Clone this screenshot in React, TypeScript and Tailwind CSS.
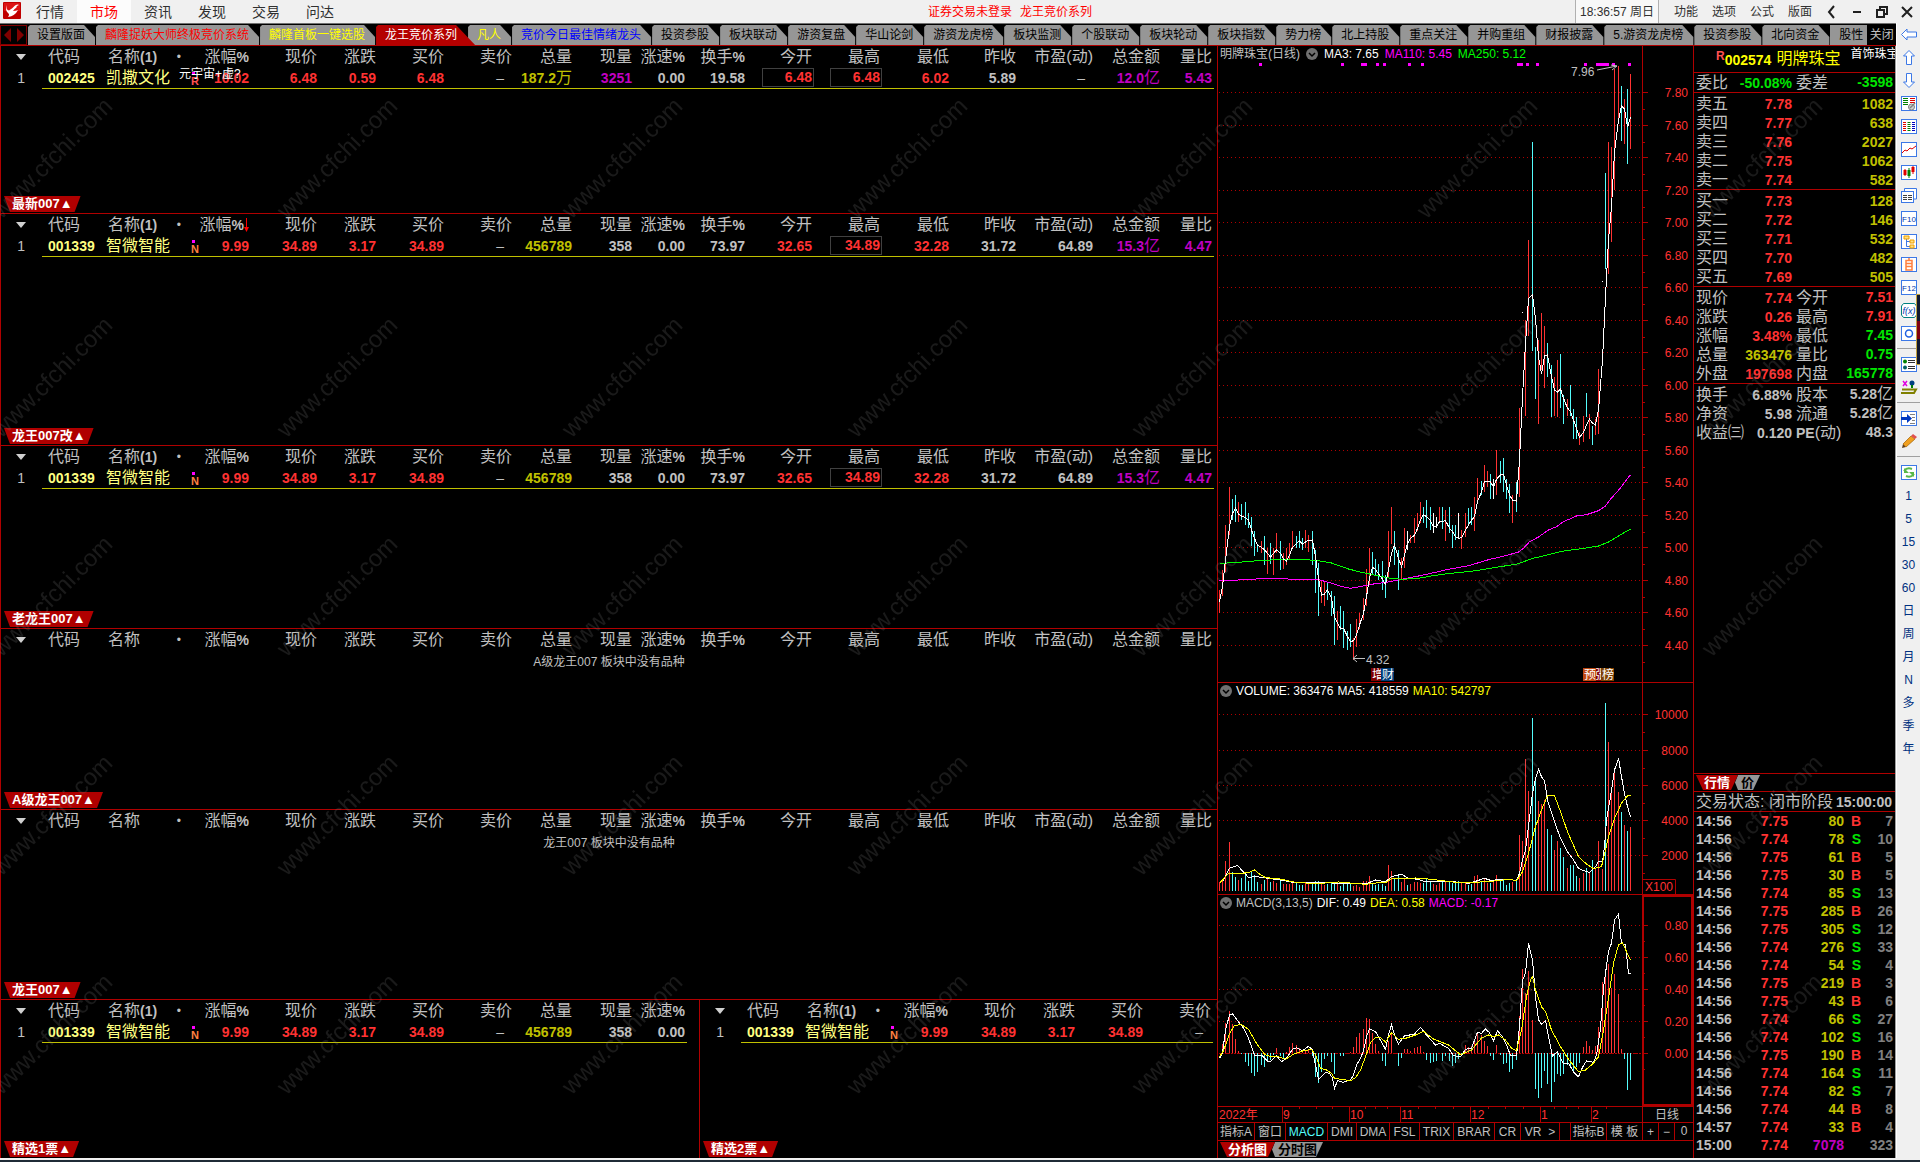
import type { ReactNode } from "react";

const UI = "font-['Liberation_Sans','Noto_Sans_CJK_SC',sans-serif]";

const NAV = ["行情", "市场", "资讯", "发现", "交易", "问达"];
const MENUS = ["功能", "选项", "公式", "版面"];

const PAGES: { name: string; cls?: string }[] = [
  { name: "设置版面" },
  { name: "麟隆捉妖大师终极竞价系统", cls: "text-[#ff0000]" },
  { name: "麟隆首板一键选股", cls: "text-[#ffff00]" },
  { name: "龙王竞价系列" },
  { name: "凡人", cls: "text-[#ffff00]" },
  { name: "竞价今日最佳情绪龙头", cls: "text-[#0000ff]" },
  { name: "投资参股" },
  { name: "板块联动" },
  { name: "游资复盘" },
  { name: "华山论剑" },
  { name: "游资龙虎榜" },
  { name: "板块监测" },
  { name: "个股联动" },
  { name: "板块轮动" },
  { name: "板块指数" },
  { name: "势力榜" },
  { name: "北上持股" },
  { name: "重点关注" },
  { name: "并购重组" },
  { name: "财报披露" },
  { name: "5.游资龙虎榜" },
  { name: "投资参股" },
  { name: "北向资金" },
];

const RED = "text-[#ff3232]";
const GRAY = "text-[#c0c0c0]";
const YELLOW = "text-[#c0c000]";
const PURPLE = "text-[#c000c0]";
const GREEN = "text-[#00e600]";

const COLS = [
  { name: "涨幅%", w: "w-[68px]" },
  { name: "现价", w: "w-[68px]" },
  { name: "涨跌", w: "w-[59px]" },
  { name: "买价", w: "w-[68px]" },
  { name: "卖价", w: "w-[68px]" },
  { name: "总量", w: "w-[60px]" },
  { name: "现量", w: "w-[60px]" },
  { name: "涨速%", w: "w-[53px]" },
  { name: "换手%", w: "w-[60px]" },
  { name: "今开", w: "w-[67px]" },
  { name: "最高", w: "w-[68px]" },
  { name: "最低", w: "w-[69px]" },
  { name: "昨收", w: "w-[67px]" },
  { name: "市盈(动)", w: "w-[77px]" },
  { name: "总金额", w: "w-[67px]" },
  { name: "量比", w: "w-[52px]" },
];

type Cell = { v: string; c: string; box?: boolean };
type Stock = { code: string; name: string; mark: string; note?: string; cells: Cell[] };

const KAISA: Stock = {
  code: "002425",
  name: "凯撒文化",
  mark: "R",
  note: "元宇宙+虚?",
  cells: [
    { v: "10.02", c: RED },
    { v: "6.48", c: RED },
    { v: "0.59", c: RED },
    { v: "6.48", c: RED },
    { v: "–", c: GRAY },
    { v: "187.2万", c: YELLOW },
    { v: "3251", c: PURPLE },
    { v: "0.00", c: GRAY },
    { v: "19.58", c: GRAY },
    { v: "6.48", c: RED, box: true },
    { v: "6.48", c: RED, box: true },
    { v: "6.02", c: RED },
    { v: "5.89", c: GRAY },
    { v: "–", c: GRAY },
    { v: "12.0亿", c: PURPLE },
    { v: "5.43", c: PURPLE },
  ],
};

const ZHIWEI: Stock = {
  code: "001339",
  name: "智微智能",
  mark: "N",
  cells: [
    { v: "9.99", c: RED },
    { v: "34.89", c: RED },
    { v: "3.17", c: RED },
    { v: "34.89", c: RED },
    { v: "–", c: GRAY },
    { v: "456789", c: YELLOW },
    { v: "358", c: GRAY },
    { v: "0.00", c: GRAY },
    { v: "73.97", c: GRAY },
    { v: "32.65", c: RED },
    { v: "34.89", c: RED, box: true },
    { v: "32.28", c: RED },
    { v: "31.72", c: GRAY },
    { v: "64.89", c: GRAY },
    { v: "15.3亿", c: PURPLE },
    { v: "4.47", c: PURPLE },
  ],
};

// chart series are kept in thirds of a pixel: x, top, bottom, colour
const CANDLES =
  "13 1230 1300 r,22 1170 1248 r,31 1035 1175 r,43 921 1065 r,52 957 1020 c,61 945 1026 c,70 965 1026 r,79 972 1020 c,91 965 1035 c,100 999 1044 c,109 1011 1098 c,118 1053 1128 c,127 1093 1116 c,139 1083 1120 r,148 1068 1155 c,157 1105 1182 r,166 1090 1152 c,175 1105 1185 r,184 1059 1120 r,196 1083 1170 c,205 1120 1167 r,214 1105 1155 r,223 1090 1140 r,232 1053 1105 r,244 1068 1105 c,253 1053 1105 c,262 1075 1112 c,271 1050 1105 r,280 1065 1115 r,292 1053 1155 c,301 1110 1239 c,310 1150 1308 c,319 1200 1270 r,328 1206 1278 r,337 1206 1260 c,349 1233 1308 c,358 1248 1395 c,367 1293 1380 r,376 1278 1350 c,385 1293 1404 c,397 1353 1410 c,406 1332 1400 c,415 1375 1440 r,424 1317 1401 r,433 1299 1347 r,445 1254 1320 r,454 1167 1278 r,463 1104 1215 r,472 1116 1185 c,481 1137 1186 c,490 1152 1200 c,502 1143 1230 c,511 1185 1254 c,520 1053 1190 r,529 981 1092 r,538 1053 1155 c,550 1110 1230 c,559 1135 1200 r,568 1044 1165 r,577 1053 1110 w,586 1065 1090 r,598 1014 1090 r,607 999 1053 r,616 966 1029 r,625 981 1029 c,634 960 1044 c,646 981 1050 c,655 999 1059 w,664 1011 1044 w,673 981 1026 r,682 981 1047 c,691 990 1083 r,703 981 1060 c,712 1035 1104 c,721 1035 1080 c,730 999 1077 w,739 1050 1107 r,751 999 1070 r,760 984 1035 c,769 981 1035 c,778 951 1053 r,787 894 960 r,799 903 945 c,808 855 935 r,817 873 921 r,826 882 957 c,835 897 957 w,844 810 945 r,856 843 910 c,865 834 936 c,874 897 957 c,883 912 999 c,892 945 1029 r,904 906 996 c,913 684 951 r,922 396 399 w,931 420 708 r,940 180 468 r,952 -114 513 c,961 501 657 c,970 480 732 r,979 399 570 r,988 438 624 r,997 489 591 c,1009 555 711 c,1018 591 708 r,1027 540 711 r,1036 522 684 c,1045 645 732 c,1057 657 708 r,1066 615 708 c,1075 687 777 c,1084 711 777 c,1093 755 795 r,1105 708 786 r,1114 639 711 c,1123 702 777 r,1132 738 795 c,1141 717 765 r,1150 567 762 r,1162 303 306 w,1171 -21 267 c,1180 -114 282 r,1189 -99 186 r,1198 -333 30 r,1210 -342 -183 r,1219 -282 -117 c,1228 -243 -108 r,1237 -273 -48 c,1246 -318 -93 r";

const MA3 =
  "13,1265 22,1220 31,1140 43,1040 52,1000 61,985 70,1002 79,1008 91,1013 100,1020 109,1050 118,1075 127,1095 139,1102 148,1110 157,1120 166,1132 175,1120 184,1110 196,1120 205,1137 214,1143 223,1125 232,1102 244,1090 253,1083 262,1092 271,1086 280,1081 292,1080 301,1130 310,1195 319,1245 328,1242 337,1230 349,1255 358,1310 367,1330 376,1345 385,1345 397,1370 406,1385 415,1382 424,1365 433,1335 445,1300 454,1250 463,1195 472,1162 481,1168 490,1182 502,1198 511,1213 520,1170 529,1120 538,1095 550,1135 559,1160 568,1125 577,1090 586,1075 598,1066 607,1045 616,1020 625,1004 634,1010 646,1022 655,1040 664,1040 673,1025 682,1024 691,1022 703,1045 712,1055 721,1070 730,1075 739,1073 751,1050 760,1035 769,1020 778,1010 787,965 799,935 808,905 817,904 826,906 835,920 844,898 856,885 865,883 874,915 883,945 892,960 904,963 913,840 922,650 931,490 940,355 952,345 961,415 970,530 979,582 988,528 997,525 1009,590 1018,630 1027,636 1036,627 1045,655 1057,684 1066,695 1075,720 1084,745 1093,772 1105,757 1114,735 1123,717 1132,730 1141,735 1150,690 1162,540 1171,350 1180,180 1189,80 1198,-85 1210,-180 1219,-222 1228,-213 1237,-158 1246,-188";
const MA110 =
  "13,1201 70,1200 160,1195 205,1195 222,1198 310,1199 340,1207 375,1219 406,1225 440,1219 475,1212 520,1206 560,1198 610,1188 660,1177 700,1168 760,1157 820,1139 870,1127 910,1116 925,1105 943,1085 970,1071 1000,1050 1025,1040 1045,1025 1085,1008 1115,1004 1150,992 1170,978 1190,954 1215,924 1246,884";
const MA250 =
  "13,1150 60,1148 100,1144 170,1140 250,1138 300,1141 350,1149 400,1167 440,1177 480,1186 520,1194 560,1198 610,1195 650,1188 690,1182 780,1172 850,1161 910,1151 950,1136 1000,1124 1040,1114 1100,1106 1150,1098 1180,1086 1210,1068 1246,1047";

const VOLUMES =
  "13 665 r,22 657 r,31 603 r,43 546 r,52 636 c,61 650 c,70 660 r,79 655 c,91 642 c,100 662 c,109 634 c,118 645 c,127 665 c,139 672 r,148 660 c,157 655 r,166 666 c,175 663 r,184 668 r,196 664 c,205 672 r,214 672 r,223 672 r,232 668 r,244 670 c,253 675 c,262 676 c,271 666 r,280 672 r,292 666 c,301 663 c,310 663 c,319 672 r,328 675 r,337 672 c,349 668 c,358 666 c,367 669 r,376 678 c,385 670 c,397 670 c,406 672 c,415 678 r,424 675 r,433 680 r,445 664 r,454 664 r,463 648 r,472 668 c,481 674 c,490 672 c,502 672 c,511 678 c,520 615 r,529 633 r,538 657 c,550 648 c,559 666 r,568 658 r,577 676 c,586 672 r,598 666 r,607 666 r,616 668 r,625 670 c,634 656 c,646 666 c,655 672 r,664 676 r,673 668 r,682 664 c,691 664 r,703 666 c,712 668 c,721 668 c,730 664 c,739 668 r,751 668 r,760 676 c,769 672 c,778 648 r,787 645 r,799 666 c,808 657 r,817 668 r,826 668 c,835 664 r,844 645 r,856 660 c,865 660 c,874 674 c,883 668 c,892 666 r,904 660 c,913 525 r,922 543 r,931 297 r,940 393 r,952 174 c,961 355 c,970 423 r,979 432 r,988 420 r,997 507 c,1009 525 c,1018 570 r,1027 543 r,1036 564 c,1045 591 c,1057 624 r,1066 615 c,1075 615 c,1084 648 c,1093 654 r,1105 639 r,1114 624 c,1123 635 r,1132 600 c,1141 625 r,1150 543 r,1162 627 r,1171 129 c,1180 246 r,1189 380 r,1198 330 r,1210 396 r,1219 456 c,1228 495 r,1237 513 c,1246 501 r";
const VOL5 =
  "13,670 25,660 43,625 68,616 80,630 100,652 120,650 140,652 180,658 240,668 300,668 400,670 450,672 480,660 510,665 530,650 560,643 580,655 610,658 625,664 660,666 700,664 760,670 785,663 808,655 830,662 850,658 880,658 905,662 913,640 922,600 931,570 940,500 952,400 961,355 970,328 979,350 988,362 997,420 1018,485 1036,535 1057,575 1075,600 1090,625 1105,632 1123,637 1140,620 1150,604 1162,605 1168,560 1175,480 1185,410 1198,330 1210,295 1219,350 1228,400 1237,440 1246,470";
const VOL10 =
  "13,670 40,640 60,641 100,638 118,630 130,640 150,653 190,656 240,667 300,671 370,666 450,673 490,668 510,668 530,656 560,655 600,654 650,658 720,667 780,667 850,662 880,658 905,662 922,635 940,580 961,500 979,450 997,407 1018,407 1036,455 1057,515 1090,590 1115,612 1135,626 1160,620 1171,570 1180,530 1198,475 1219,430 1228,418 1237,408 1246,405";

const MACD =
  "22 1152,31 1089,43 1053,52 1093,61 1137,70 1173,79 1184,91 1206,100 1218,109 1239,118 1248,127 1236,139 1215,148 1221,157 1206,166 1200,175 1185,184 1164,196 1188,205 1194,214 1175,223 1161,232 1149,244 1155,253 1164,262 1176,271 1172,280 1168,292 1188,301 1251,310 1269,319 1236,328 1197,337 1188,349 1206,358 1242,376 1188,385 1190,406 1176,415 1160,424 1131,433 1119,445 1107,454 1074,463 1077,472 1119,481 1152,490 1173,502 1203,511 1218,520 1143,529 1116,550 1218,559 1196,568 1167,577 1167,586 1173,598 1164,607 1161,616 1158,625 1176,634 1200,646 1209,655 1208,664 1203,682 1203,691 1190,703 1203,712 1218,721 1209,730 1197,739 1184,751 1155,760 1161,769 1158,778 1140,787 1119,799 1125,808 1143,817 1158,826 1190,835 1200,844 1155,856 1185,865 1212,874 1209,883 1236,892 1227,904 1200,913 1068,922 927,931 1000,940 933,952 1080,961 1287,970 1314,979 1284,988 1233,997 1272,1009 1326,1018 1266,1027 1242,1036 1248,1045 1242,1057 1215,1066 1221,1075 1233,1084 1221,1093 1209,1105 1161,1114 1143,1123 1158,1132 1170,1141 1158,1150 1101,1162 966,1171 936,1180 912,1189 984,1198 942,1210 1002,1219 1167,1228 1197,1237 1290,1246 1260";
const DIF =
  "13,1195 22,1180 31,1110 43,1065 52,1062 70,1085 85,1105 100,1135 109,1160 118,1185 139,1185 157,1203 166,1205 184,1187 200,1205 214,1195 232,1168 244,1163 262,1172 280,1159 292,1170 301,1215 310,1257 319,1250 330,1237 342,1240 351,1254 358,1285 367,1262 385,1267 406,1260 415,1245 424,1215 436,1195 445,1172 454,1130 463,1106 480,1115 490,1130 511,1168 520,1125 529,1094 538,1125 550,1152 568,1128 598,1122 616,1102 634,1125 660,1155 673,1150 700,1165 715,1187 736,1190 751,1168 770,1165 787,1117 799,1120 811,1107 823,1118 835,1142 847,1112 862,1130 874,1155 885,1186 904,1188 913,1100 922,960 931,940 940,850 952,900 961,1010 970,1080 980,1092 990,1082 1000,1130 1012,1188 1027,1175 1045,1212 1060,1210 1078,1240 1090,1250 1102,1222 1114,1203 1135,1207 1145,1185 1155,1105 1165,985 1180,873 1190,850 1198,780 1210,762 1220,850 1230,855 1240,940 1246,940";
const DEA =
  "13,1190 25,1172 43,1122 58,1096 80,1094 100,1108 125,1150 148,1183 166,1190 190,1190 210,1198 235,1183 262,1173 290,1168 300,1185 316,1225 334,1230 350,1240 358,1255 380,1258 405,1262 420,1253 436,1230 451,1190 466,1148 480,1132 495,1133 511,1146 529,1118 550,1138 575,1134 600,1125 625,1114 655,1137 700,1155 736,1184 770,1170 800,1134 820,1125 835,1130 850,1125 870,1140 890,1165 905,1172 920,1110 935,1010 945,960 952,950 962,990 980,1040 991,1055 1010,1110 1035,1160 1060,1198 1090,1235 1110,1230 1135,1210 1150,1190 1165,1110 1180,1015 1195,910 1210,855 1222,848 1235,875 1246,900";

const INK: Record<string, string> = { r: "#ff3232", c: "#54fcfc", w: "#ffffff" };

const ASKS = [
  ["卖五", "7.78", "1082"],
  ["卖四", "7.77", "638"],
  ["卖三", "7.76", "2027"],
  ["卖二", "7.75", "1062"],
  ["卖一", "7.74", "582"],
];
const BIDS = [
  ["买一", "7.73", "128"],
  ["买二", "7.72", "146"],
  ["买三", "7.71", "532"],
  ["买四", "7.70", "482"],
  ["买五", "7.69", "505"],
];

type Pair = [string, string, string, string, string, string];
const STATS: Pair[] = [
  ["现价", "7.74", RED, "今开", "7.51", RED],
  ["涨跌", "0.26", RED, "最高", "7.91", RED],
  ["涨幅", "3.48%", RED, "最低", "7.45", GREEN],
  ["总量", "363476", YELLOW, "量比", "0.75", GREEN],
  ["外盘", "197698", RED, "内盘", "165778", GREEN],
];
const BASICS: Pair[] = [
  ["换手", "6.88%", GRAY, "股本", "5.28亿", GRAY],
  ["净资", "5.98", GRAY, "流通", "5.28亿", GRAY],
  ["收益㈢", "0.120", GRAY, "PE(动)", "48.3", GRAY],
];

const TICKS = [
  ["14:56", "7.75", "80", "B", "7"],
  ["14:56", "7.74", "78", "S", "10"],
  ["14:56", "7.75", "61", "B", "5"],
  ["14:56", "7.75", "30", "B", "5"],
  ["14:56", "7.74", "85", "S", "13"],
  ["14:56", "7.75", "285", "B", "26"],
  ["14:56", "7.75", "305", "S", "12"],
  ["14:56", "7.74", "276", "S", "33"],
  ["14:56", "7.74", "54", "S", "4"],
  ["14:56", "7.75", "219", "B", "3"],
  ["14:56", "7.75", "43", "B", "6"],
  ["14:56", "7.74", "66", "S", "27"],
  ["14:56", "7.74", "102", "S", "16"],
  ["14:56", "7.75", "190", "B", "14"],
  ["14:56", "7.74", "164", "S", "11"],
  ["14:56", "7.74", "82", "S", "7"],
  ["14:56", "7.74", "44", "B", "8"],
  ["14:57", "7.74", "33", "B", "4"],
  ["15:00", "7.74", "7078", "", "323"],
];

const INDICATORS = [
  { t: "指标A", w: "w-[37px]" },
  { t: "窗口", w: "w-[31px]" },
  { t: "MACD", w: "w-[42px]" },
  { t: "DMI", w: "w-[29px]" },
  { t: "DMA", w: "w-[33px]" },
  { t: "FSL", w: "w-[30px]" },
  { t: "TRIX", w: "w-[34px]" },
  { t: "BRAR", w: "w-[41px]" },
  { t: "CR", w: "w-[26px]" },
];

const PERIODS = ["1", "5", "15", "30", "60", "日", "周", "月", "N", "多", "季", "年"];

export default function App() {
  return (
    <div className={`${UI} relative flex h-screen flex-col overflow-hidden bg-black text-xs`}>
      <TitleBar />
      <div className="flex min-h-0 flex-1">
        <div className="flex min-w-0 flex-1 flex-col">
          <PageTabs />
          <main className="grid min-h-0 flex-1 grid-cols-[1218fr_476fr_202fr]">
            <Boards />
            <Charts />
            <Quote />
          </main>
        </div>
        <Toolbar />
      </div>
      <div className="h-1 shrink-0 border-t-2 border-[#f0f0f0] bg-[#1f2b36]" />
      <Watermark />
    </div>
  );
}

function TitleBar() {
  return (
    <header className="flex h-6 shrink-0 items-stretch border-b border-[#707070] bg-[#f0f0f0] text-[#303030]">
      <svg viewBox="0 0 18 17" className="mt-[2px] ml-[3px] h-[17px] w-[18px]">
        <rect width="18" height="17" rx="1" fill="#c00000" />
        <rect x="1" y="1" width="16" height="8" fill="#dc1414" />
        <path
          d="M3.500 3Q3 8 6 8.500Q10 6 12 3.500Q15 2 16 3Q13 4 13.500 5.500Q11 7 10 9Q13 9 15 8Q12 14 5 15Q7 12 5 11Q2 8 3.500 3Z"
          fill="#fff"
        />
      </svg>
      <nav className="ml-[2px] flex text-sm">
        {NAV.map((n) => (
          <a
            key={n}
            href="#"
            className={`flex w-[54px] items-center justify-center ${n === "市场" ? "bg-[#fcfcfc] text-[#ff0000]" : ""}`}
          >
            {n}
          </a>
        ))}
      </nav>
      <h1 className="flex flex-1 items-center justify-center gap-2 pl-[98px] text-[#ff0000]">
        <span>证券交易未登录</span>
        <span>龙王竞价系列</span>
      </h1>
      <time className="flex w-[84px] items-center justify-center border-x border-[#b0b0b0] bg-[#f8f8f8]">
        18:36:57 周日
      </time>
      <div className="flex pl-2">
        {MENUS.map((m) => (
          <button key={m} type="button" className="w-[38px]">
            {m}
          </button>
        ))}
      </div>
      <div className="flex items-center pr-px">
        <WinButton label="收起">
          <path d="M10 2L5 8L10 14" />
        </WinButton>
        <WinButton label="最小化">
          <path d="M4 8H12" />
        </WinButton>
        <WinButton label="还原">
          <path d="M3 6H10V13H3ZM6 6V3H13V10H10" />
        </WinButton>
        <WinButton label="关闭窗口">
          <path d="M3 3L13 13M13 3L3 13" />
        </WinButton>
      </div>
    </header>
  );
}

function WinButton({ label, children }: { label: string; children: ReactNode }) {
  return (
    <button type="button" aria-label={label} className="flex w-[25px] justify-center">
      <svg viewBox="0 0 16 16" className="size-4" fill="none" stroke="#202020" strokeWidth="2">
        {children}
      </svg>
    </button>
  );
}

function PageTabs() {
  return (
    <div className="flex h-[22px] shrink-0 items-end overflow-hidden border-b border-[#b00000] whitespace-nowrap text-black">
      <button type="button" aria-label="翻页" className="mr-px flex h-5 w-[27px] items-center justify-center border border-[#800000]">
        <svg viewBox="0 0 22 14" className="h-[14px] w-[22px]" fill="#800000">
          <path d="M8 0V14L1 7ZM14 0V14L21 7Z" />
        </svg>
      </button>
      {PAGES.map((p, i) =>
        p.name === "龙王竞价系列" ? (
          <button
            key={i}
            type="button"
            className="relative z-10 -mr-[7px] h-5 bg-[#b40000] pr-[18px] pl-[9px] text-white [clip-path:polygon(0_2px,2px_0,calc(100%-19px)_0,100%_100%,0_100%)]"
          >
            {p.name}
          </button>
        ) : (
          <button
            key={i}
            type="button"
            className={`h-5 bg-[#969696] pr-[11px] pl-[9px] [clip-path:polygon(0_2px,2px_0,calc(100%-12px)_0,calc(100%-1px)_12px,calc(100%-1px)_100%,0_100%)] ${p.cls ?? ""}`}
          >
            {p.name}
          </button>
        ),
      )}
      <button type="button" className="h-5 w-[37px] overflow-hidden bg-[#969696] pl-[9px] text-left">
        股性
      </button>
      <button type="button" className="h-5 flex-1 bg-black text-center text-[#c0c0c0]">
        关闭
      </button>
    </div>
  );
}

function Boards() {
  return (
    <section className="grid min-h-0 min-w-0 grid-rows-[168fr_232fr_183fr_181fr_190fr_158fr] border-x border-[#b00000]">
      <Board tab="最新007" stock={KAISA} />
      <Board tab="龙王007改" stock={ZHIWEI} sorted />
      <Board tab="老龙王007" stock={ZHIWEI} />
      <Board tab="A级龙王007" empty="A级龙王007 板块中没有品种" />
      <Board tab="龙王007" empty="龙王007 板块中没有品种" />
      <div className="grid min-h-0 grid-cols-[698fr_518fr]">
        <Board tab="精选1票" stock={ZHIWEI} count={8} last />
        <div className="grid border-l border-[#b00000]">
          <Board tab="精选2票" stock={ZHIWEI} count={5} last />
        </div>
      </div>
    </section>
  );
}

function Board(props: {
  tab: string;
  stock?: Stock;
  empty?: string;
  sorted?: boolean;
  count?: number;
  last?: boolean;
}) {
  const { tab, stock, empty, sorted, count = 16, last } = props;
  const cols = COLS.slice(0, count);

  return (
    <div className={`flex min-h-0 min-w-0 flex-col overflow-hidden ${last ? "" : "border-b border-[#b00000]"}`}>
      <table className="w-full table-fixed border-separate border-spacing-0 text-right text-sm leading-4 whitespace-nowrap">
        <thead>
          <tr className="h-[21px] text-base leading-4 text-[#c0c0c0] [&>th]:p-0 [&>th]:pr-[2px] [&>th]:font-normal">
            <th className="w-[41px]">
              <svg viewBox="0 0 10 6" className="mr-[14px] ml-auto h-[6px] w-[10px]" fill="#d0d0d0">
                <path d="M0 0H10L5 6Z" />
              </svg>
            </th>
            <th className="w-[61px] text-left">
              <span className="pl-[6px]">代码</span>
            </th>
            <th className="w-[80px]">
              <span className="flex items-center justify-between pl-[5px]">
                <span>名称{stock && <span className="text-sm leading-4 font-bold">(1)</span>}</span>
                <span className="text-xs leading-4">•</span>
              </span>
            </th>
            {cols.map((c) => (
              <th key={c.name} className={c.w}>
                {c.name.replace("%", "")}
                {c.name.endsWith("%") && <span className="text-sm leading-4 font-bold">%</span>}
                {sorted && c.name === "涨幅%" && (
                  <svg viewBox="0 0 5 14" className="inline h-[14px] w-[5px]">
                    <path d="M2 0H3V9H5L2.500 14L0 9H2Z" fill="#ff0000" />
                  </svg>
                )}
              </th>
            ))}
            <th />
          </tr>
        </thead>
        {stock && (
          <tbody>
            <tr className="h-[22px] font-bold [&>td]:p-0 [&>td]:pr-[2px]">
              <td className="font-normal text-[#c0c0c0]">
                <span className="pr-[15px]">1</span>
              </td>
              <td className="border-b border-[#c0c000] text-left text-[#ffff80]">
                <span className="pl-[6px]">{stock.code}</span>
              </td>
              <td className="border-b border-[#c0c000] text-left text-base leading-4 font-normal text-[#ffff80]">
                <span className="pl-[3px]">{stock.name}</span>
              </td>
              {stock.cells.slice(0, count).map((c, i) => (
                <td key={i} className={`relative border-b border-[#c0c000] ${c.c}`}>
                  {i === 0 && <Mark stock={stock} />}
                  {c.box ? (
                    <span className="-mr-[2px] ml-auto block h-[19px] w-[52px] border border-[#404040] pr-px leading-[17px]">
                      {c.v}
                    </span>
                  ) : (
                    <Num v={c.v} />
                  )}
                </td>
              ))}
              <td />
            </tr>
          </tbody>
        )}
      </table>
      {empty && <p className="pt-[4px] text-center text-[#c0c0c0]">{empty}</p>}
      <button
        type="button"
        className="mt-auto mb-px ml-[3px] h-4 shrink-0 self-start bg-[#b00000] px-[8px] text-[13px] leading-4 font-bold text-white [clip-path:polygon(0_0,100%_0,calc(100%-6px)_100%,6px_100%)]"
      >
        {tab}▲
      </button>
    </div>
  );
}

// digits are bold, the 万/亿 unit is drawn larger in normal weight
function Num({ v }: { v: string }) {
  const unit = /[万亿]$/.test(v) ? v.slice(-1) : "";
  if (v === "–") return <span className="pr-2 font-normal">–</span>;
  return (
    <>
      {unit ? v.slice(0, -1) : v}
      {unit && <span className="text-base leading-4 font-normal">{unit}</span>}
    </>
  );
}

function Mark({ stock }: { stock: Stock }) {
  return (
    <>
      <span className="absolute top-[5px] left-[9px] size-[3px] bg-[#ff00ff]" />
      <span
        className={`absolute top-[8px] left-[8px] text-[11px] leading-3 ${stock.mark === "R" ? "text-[#ff5050]" : "text-[#ff8040]"}`}
      >
        {stock.mark}
      </span>
      {stock.note && (
        <span className="absolute -top-px -left-[4px] text-xs leading-4 font-normal text-white">{stock.note}</span>
      )}
    </>
  );
}

function Line({ pts, color, dy }: { pts: string; color: string; dy: number }) {
  const points = pts
    .split(" ")
    .map((p) => {
      const [x, y] = p.split(",").map(Number);
      return `${Math.floor(x / 3) + 1215.5},${(y / 3 + dy).toFixed(1)}`;
    })
    .join(" ");
  return <polyline points={points} fill="none" stroke={color} strokeWidth="1" shapeRendering="crispEdges" />;
}

function Bar({ x, a, b, color, dy }: { x: number; a: number; b: number; color: string; dy: number }) {
  const top = Math.round(Math.min(a, b) / 3) + dy;
  const h = Math.max(1, Math.round(Math.abs(b - a) / 3));
  return <rect x={Math.floor(x / 3) + 1215} y={top} width="1" height={h} fill={color} />;
}

function Axis(props: { rows: [string, number][]; from: number; to: number; half: number }) {
  const { rows, from, to, half } = props;
  return (
    <g stroke="#b00000" shapeRendering="crispEdges">
      {rows.map(([t, y]) => (
        <g key={t}>
          <path d={`M1219 ${y + 0.5}H1642`} strokeDasharray="1 3" />
          <path d={`M1642 ${y + 0.5}H1648M1642 ${y + half + 0.5}H1645`} />
          <text x="1688" y={y + 5} fill="#ff3232" stroke="none" textAnchor="end" fontSize="12">
            {t}
          </text>
        </g>
      ))}
      <path d={`M1642.500 ${from}V${to}`} />
    </g>
  );
}

function Fold() {
  return (
    <svg viewBox="0 0 12 12" className="size-3">
      <circle cx="6" cy="6" r="6" fill="#707070" />
      <path d="M3 5L6 8L9 5" fill="none" stroke="#000" strokeWidth="1.500" />
    </svg>
  );
}

const PRICE_ROWS: [string, number][] = Array.from({ length: 18 }, (_, i) => [
  (7.8 - i * 0.2).toFixed(2),
  Math.round(92 + i * 32.53),
]);

const FLAGS = [
  [1259, 3], [1341, 3], [1361, 6], [1376, 3], [1383, 3], [1408, 3], [1421, 3], [1517, 6],
  [1526, 3], [1536, 3], [1584, 3], [1596, 13], [1612, 3], [1628, 3],
];

// drawn in order, later badges cover the earlier ones
const BADGES = [
  { t: "增", x: 1371, c: "#800000" },
  { t: "财", x: 1381, c: "#003c78" },
  { t: "涨", x: 1592, c: "#800000" },
  { t: "预", x: 1583, c: "#c04810" },
  { t: "榜", x: 1601, c: "#804000" },
];

function Charts() {
  return (
    <section className="grid min-h-0 min-w-0 grid-rows-[637fr_212fr_212fr_16fr_18fr_17fr] border-r border-[#b00000]">
      <div className="relative min-h-0 border-b border-[#b00000]">
        <div className="absolute top-0 left-[2px] flex h-4 items-center gap-[6px] whitespace-nowrap">
          <span className="text-[#c0c0c0]">明牌珠宝(日线)</span>
          <Fold />
          <span className="text-white">MA3: 7.65</span>
          <span className="text-[#ff00ff]">MA110: 5.45</span>
          <span className="text-[#00ff00]">MA250: 5.12</span>
        </div>
        <svg viewBox="1218 46 475 636" className="block size-full">
          <Axis rows={PRICE_ROWS} from={46} to={682} half={17} />
          {FLAGS.map(([x, w]) => (
            <rect key={x} x={x} y="63" width={w} height="3" fill="#ff00ff" />
          ))}
          {CANDLES.split(",").map((s) => {
            const [x, a, b, k] = s.split(" ");
            return <Bar key={x} x={+x} a={+a} b={+b} color={INK[k]} dy={180} />;
          })}
          <Line pts={MA110} color="#ff00ff" dy={180} />
          <Line pts={MA250} color="#00ff00" dy={180} />
          <Line pts={MA3} color="#ffffff" dy={180} />
          <g fill="#c0c0c0" fontSize="12">
            <text x="1571" y="76">7.96</text>
            <text x="1366" y="664">4.32</text>
          </g>
          <path
            d="M1597 70L1617 66M1611 65L1617 66L1612 70M1353 658.500H1365M1357 655L1353 658.500L1357 662"
            fill="none"
            stroke="#c0c0c0"
          />
          {BADGES.map((b) => (
            <g key={b.t}>
              <rect x={b.x} y="668" width="13" height="13" fill={b.c} />
              <text x={b.x + 1} y="679" fontSize="12" fill="#fff">
                {b.t}
              </text>
            </g>
          ))}
        </svg>
      </div>

      <div className="relative min-h-0 border-b border-[#b00000]">
        <div className="absolute top-0 left-[2px] flex h-4 items-center gap-[4px] whitespace-nowrap text-white">
          <Fold />
          <span>VOLUME: 363476</span>
          <span>MA5: 418559</span>
          <span className="text-[#ffff00]">MA10: 542797</span>
        </div>
        <svg viewBox="1218 683 475 211" className="block size-full">
          <Axis
            rows={[["10000", 714], ["8000", 750], ["6000", 785], ["4000", 820], ["2000", 855]]}
            from={683}
            to={894}
            half={18}
          />
          {VOLUMES.split(",").map((s) => {
            const [x, y, k] = s.split(" ");
            return <Bar key={x} x={+x} a={+y} b={693} color={INK[k]} dy={660} />;
          })}
          <Line pts={VOL5} color="#ffffff" dy={660} />
          <Line pts={VOL10} color="#ffff00" dy={660} />
          <path d="M1643 879.500H1675.500V894" fill="none" stroke="#b00000" />
          <text x="1645" y="891" fontSize="12" fill="#ff3232">
            X100
          </text>
        </svg>
      </div>

      <div className="relative min-h-0 border-b border-[#b00000]">
        <div className="absolute top-0 left-[2px] flex h-4 items-center gap-[4px] whitespace-nowrap text-white">
          <Fold />
          <span className="text-[#c0c0c0]">MACD(3,13,5)</span>
          <span>DIF: 0.49</span>
          <span className="text-[#ffff00]">DEA: 0.58</span>
          <span className="text-[#ff00ff]">MACD: -0.17</span>
        </div>
        <svg viewBox="1218 895 475 211" className="block size-full">
          <Axis
            rows={[["0.80", 925], ["0.60", 957], ["0.40", 989], ["0.20", 1021], ["0.00", 1053]]}
            from={895}
            to={1106}
            half={16}
          />
          <path d="M1219 1053.500H1642" stroke="#b00000" strokeDasharray="2 1" shapeRendering="crispEdges" />
          {MACD.split(",").map((s) => {
            const [x, y] = s.split(" ").map(Number);
            return <Bar key={x} x={x} a={y} b={1180} color={y < 1180 ? INK.r : INK.c} dy={660} />;
          })}
          <Line pts={DIF} color="#ffffff" dy={660} />
          <Line pts={DEA} color="#ffff00" dy={660} />
          <rect x="1643" y="896" width="49" height="209" fill="none" stroke="#b00000" strokeWidth="2" />
        </svg>
      </div>

      <div className="min-h-0 border-b border-[#b00000]">
        <svg viewBox="1218 1107 475 15" className="block size-full" fontSize="12" fill="#ff3232">
          <path
            d="M1282.500 1107v15M1349.500 1107v15M1400.500 1107v15M1470.500 1107v15M1540.500 1107v15M1591.500 1107v15M1642.500 1107v15M1299.500 1107v2M1316.500 1107v2M1332.500 1107v2M1365.500 1107v2M1375.500 1107v2M1387.500 1107v2M1418.500 1107v2M1435.500 1107v2M1453.500 1107v2M1488.500 1107v2M1505.500 1107v2M1523.500 1107v2M1554.500 1107v2M1566.500 1107v2M1578.500 1107v2M1606.500 1107v2"
            stroke="#b00000"
          />
          <text x="1219" y="1119">2022年</text>
          <text x="1283" y="1119">9</text>
          <text x="1350" y="1119">10</text>
          <text x="1401" y="1119">11</text>
          <text x="1471" y="1119">12</text>
          <text x="1541" y="1119">1</text>
          <text x="1592" y="1119">2</text>
          <text x="1667" y="1119" textAnchor="middle" fill="#c0c0c0">日线</text>
        </svg>
      </div>

      <div className="flex min-h-0 border-b border-[#b00000] whitespace-nowrap text-[#c0c0c0] [&>button]:border-r [&>button]:border-[#b00000]">
        {INDICATORS.map((b) => (
          <button key={b.t} type="button" className={`${b.w} ${b.t === "MACD" ? "text-[#54fcfc]" : ""}`}>
            {b.t}
          </button>
        ))}
        <button type="button" className="w-[39px]">VR &nbsp;&gt;</button>
        <span className="w-[11px] border-r border-[#b00000]" />
        <button type="button" className="w-[36px]">指标B</button>
        <button type="button" className="w-[36px]">模 板</button>
        <button type="button" className="w-4">+</button>
        <button type="button" className="w-4">−</button>
        <span className="flex-1 text-center">0</span>
      </div>

      <div className="flex min-h-0 items-start pl-[2px]">
        <SlantTab on>分析图</SlantTab>
        <SlantTab>分时图</SlantTab>
      </div>
    </section>
  );
}

function SlantTab({ on, children }: { on?: boolean; children: ReactNode }) {
  return (
    <button
      type="button"
      className={
        on
          ? "relative z-10 mt-px h-[15px] bg-[#b00000] px-[8px] text-[13px] leading-[15px] font-bold text-white [clip-path:polygon(0_0,100%_0,calc(100%-7px)_100%,7px_100%)]"
          : "mt-px -ml-[3px] h-[15px] bg-[#969696] px-[6px] text-[13px] leading-[15px] font-bold text-black [clip-path:polygon(3px_0,100%_0,calc(100%-7px)_100%,3px_100%,0_50%)]"
      }
    >
      {children}
    </button>
  );
}

function Quote() {
  return (
    <aside className="flex min-h-0 min-w-0 flex-col overflow-hidden border-r border-[#a0a0a0] whitespace-nowrap">
      <div className="flex h-[27px] shrink-0 border-b border-[#b00000] pl-[22px]">
        <span className="w-4 pt-[2px] leading-4 font-bold text-[#ff5050]">R</span>
        <span className="pt-[4px] text-sm font-bold text-[#ffff00]">002574</span>
        <span className="pt-px pl-[5px] text-base text-[#ffff00]">明牌珠宝</span>
        <span className="pl-[10px] text-white">首饰珠宝</span>
      </div>
      <div className="shrink-0 border-b border-[#b00000]">
        <PairRow row={["委比", "-50.08%", GREEN, "委差", "-3598", GREEN]} />
      </div>
      <Levels rows={ASKS} />
      <Levels rows={BIDS} />
      <div className="shrink-0 border-b border-[#b00000] pt-px">
        {STATS.map((r) => (
          <PairRow key={r[0]} row={r} />
        ))}
      </div>
      <div className="pt-px">
        {BASICS.map((r) => (
          <PairRow key={r[0]} row={r} />
        ))}
      </div>

      <div className="mt-auto flex h-[19px] shrink-0 items-start border-y border-[#b00000] pl-[2px]">
        <SlantTab on>行情</SlantTab>
        <SlantTab>价</SlantTab>
      </div>
      <p className="flex h-5 shrink-0 items-center justify-between border-b border-[#b00000] pr-[3px] pl-[2px] text-base text-[#c0c0c0]">
        <span>交易状态: 闭市阶段</span>
        <span className="text-sm font-bold">15:00:00</span>
      </p>
      <table className="mb-1 w-full shrink-0 table-fixed border-separate border-spacing-0 text-right text-sm leading-[18px] font-bold">
        <tbody>
          {TICKS.map(([time, price, vol, side, n], i) => (
            <tr key={i} className="h-[18px] [&>td]:p-0">
              <td className="w-[54px] text-left text-[#c0c0c0]">
                <span className="pl-[2px]">{time}</span>
              </td>
              <td className="w-10 text-[#ff3232]">{price}</td>
              <td className={`w-[56px] ${side ? YELLOW : PURPLE}`}>{vol}</td>
              <td className={`w-[17px] ${side === "B" ? RED : GREEN}`}>{side}</td>
              <td className="text-[#808080]">
                <span className="pr-[2px]">{n}</span>
              </td>
            </tr>
          ))}
        </tbody>
      </table>
    </aside>
  );
}

function PairRow({ row }: { row: Pair }) {
  const [a, av, ac, b, bv, bc] = row;
  return (
    <div className="flex h-[19px] items-center pr-[2px] pl-[2px] text-base leading-[19px] text-[#c0c0c0]">
      <span>{a}</span>
      <span className={`ml-auto text-sm font-bold ${ac}`}>{av}</span>
      <span className="flex w-[101px] items-center justify-between pl-1">
        <span>
          {b.startsWith("PE") && <b className="text-sm">PE</b>}
          {b.replace("PE", "")}
        </span>
        <span className={`text-sm leading-[19px] font-bold ${bc}`}>
          <Num v={bv} />
        </span>
      </span>
    </div>
  );
}

function Levels({ rows }: { rows: string[][] }) {
  return (
    <div className="shrink-0 border-b border-[#b00000] pt-px">
      {rows.map(([label, price, vol]) => (
        <div key={label} className="flex h-[19px] items-center pr-[2px] pl-[2px] text-sm font-bold">
          <span className="text-base leading-[19px] font-normal text-[#c0c0c0]">{label}</span>
          <span className="ml-auto text-[#ff3232]">{price}</span>
          <span className="w-[101px] text-right text-[#c0c000]">{vol}</span>
        </div>
      ))}
    </div>
  );
}

const FRAME = <rect x=".5" y=".5" width="15" height="14" fill="#fff" stroke="#3c78e6" />;

const TOOLS: { label: string; art: ReactNode; gap?: boolean }[] = [
  { label: "后退", art: <path d="M.5 7.500L6 2V5H15.500V10H6V13Z" fill="#fff" stroke="#3c78e6" /> },
  { label: "上翻", art: <path d="M8 .5L13.500 6H10.500V14.500H5.500V6H2.500Z" fill="#fff" stroke="#3c78e6" /> },
  { label: "下翻", art: <path d="M8 14.500L13.500 9H10.500V.5H5.500V9H2.500Z" fill="#fff" stroke="#3c78e6" /> },
  {
    label: "自选报价",
    art: (
      <>
        {FRAME}
        <path d="M2 2.500H7M2 4.500H7M2 6.500H7M2 8.500H7" stroke="#008000" />
        <path d="M9 2.500H14M9 4.500H14M9 6.500H14" stroke="#e00000" />
        <circle cx="10.500" cy="11" r="3" fill="#d0d0d0" stroke="#808080" />
        <path d="M9 12L14 7" stroke="#808080" strokeWidth="1.500" />
      </>
    ),
  },
  {
    label: "行情列表",
    art: (
      <>
        {FRAME}
        <g strokeDasharray="1 1" strokeWidth="3">
          <path d="M3.500 3V13" stroke="#e00000" />
          <path d="M8 3V13" stroke="#008000" />
          <path d="M12.500 3V13" stroke="#0000c0" />
        </g>
      </>
    ),
  },
  { label: "分时走势", art: <>{FRAME}<path d="M1 11L4 8L6 9L9 6L11 7L15 4" fill="none" stroke="#e00000" /></> },
  {
    label: "K线图",
    art: (
      <>
        {FRAME}
        <path d="M4 4V11M12 1V9" stroke="#e00000" />
        <path d="M2.500 5H5.500V10H2.500ZM10.500 2H13.500V7H10.500Z" fill="#e00000" />
        <path d="M8 3V13" stroke="#008000" />
        <path d="M6.500 5H9.500V11H6.500Z" fill="#008000" />
      </>
    ),
  },
  {
    label: "多窗口",
    art: (
      <>
        <path d="M3.500 3V.5H15.500V11H13" fill="#fff" stroke="#3c78e6" />
        <rect x=".5" y="3.500" width="12" height="11" fill="#fff" stroke="#3c78e6" />
        <path d="M2 7.500H6M7 7.500H11M2 9.500H6M7 9.500H11M2 11.500H6M7 11.500H11" stroke="#404040" />
      </>
    ),
  },
  {
    label: "个股资料",
    art: (
      <>
        {FRAME}
        <text x="8" y="11" textAnchor="middle" fontSize="8" fill="#0038b0">F10</text>
      </>
    ),
  },
  {
    label: "板块树",
    art: (
      <>
        {FRAME}
        <path d="M5.500 5V12.500H9M5.500 7.500H9" fill="none" stroke="#3c78e6" />
        <path d="M3 2H8V5H3ZM9 6H13V9H9ZM9 11H13V14H9Z" fill="#ffe080" stroke="#f0a000" />
      </>
    ),
  },
  {
    label: "自定义",
    art: (
      <>
        {FRAME}
        <path d="M5 3.500H11V13H5ZM5 6.500H11M5 9.500H11M8 1V3" fill="none" stroke="#ff8040" strokeWidth="1.500" />
      </>
    ),
  },
  {
    label: "委托",
    art: (
      <>
        {FRAME}
        <text x="8" y="11" textAnchor="middle" fontSize="8" fill="#0038b0">F12</text>
      </>
    ),
  },
  {
    label: "公式",
    art: (
      <>
        <path d="M2.500 .5H13.500L15.500 3V12L13.500 14.500H2.500L.5 12V3Z" fill="#fff" stroke="#008080" />
        <text x="8" y="11" textAnchor="middle" fontSize="9" fontStyle="italic" fill="#0038b0">f(x)</text>
      </>
    ),
  },
  { label: "查找", gap: true, art: <>{FRAME}<circle cx="8" cy="7.500" r="3.500" fill="none" stroke="#2060e0" strokeWidth="1.500" /></> },
  {
    label: "清单",
    art: (
      <>
        {FRAME}
        <path d="M7 3.500H14M7 5.500H14M7 9.500H14M7 11.500H14" stroke="#303030" />
        <circle cx="4" cy="4.500" r="2" fill="#008000" />
        <circle cx="4" cy="10.500" r="2" fill="#006060" />
      </>
    ),
  },
  {
    label: "画线",
    gap: true,
    art: (
      <>
        <path d="M2 1L6 6M6 1L2 6" stroke="#e000e0" strokeWidth="1.500" />
        <circle cx="11" cy="3" r="2.500" fill="#004080" />
        <path d="M11 5V8" stroke="#008000" strokeWidth="2" />
        <path d="M1 9.500H15L13 13H0" fill="none" stroke="#808000" strokeWidth="2" />
      </>
    ),
  },
  {
    label: "导出",
    art: (
      <>
        {FRAME}
        <path d="M9 3.500H14M11 6.500H14M11 9.500H14M9 12.500H14" stroke="#808080" />
        <path d="M0 6H6V3L11 7.500L6 12V9H0Z" fill="#0038c0" />
      </>
    ),
  },
  {
    label: "编辑",
    gap: true,
    art: (
      <>
        <path d="M1 14L2 10L5 13Z" fill="#604020" />
        <path d="M2 10L10 2L14 5L5 13Z" fill="#f0a020" stroke="#a06000" strokeWidth=".7" />
        <path d="M10 2L12 0L16 3L14 5Z" fill="#e05050" />
      </>
    ),
  },
  {
    label: "刷新",
    art: (
      <>
        {FRAME}
        <path d="M3 6Q6 2 11 4M13 9Q10 13 5 11" fill="none" stroke="#58b848" strokeWidth="2" />
        <path d="M3 3V8H8ZM13 12V7H8Z" fill="#58b848" />
      </>
    ),
  },
];

function Toolbar() {
  return (
    <div className="relative -mt-px flex w-6 shrink-0 flex-col border-l border-white bg-[#f0f0f0] text-[#003080]">
      {TOOLS.map((t) => (
        <div key={t.label} className={t.gap ? "h-[31px]" : "h-[23px]"}>
          <button type="button" aria-label={t.label} className="flex h-[23px] w-full items-center justify-center">
            <svg viewBox="0 0 16 15" className="h-[15px] w-4 overflow-visible">
              {t.art}
            </svg>
          </button>
          {t.gap && <hr className="mt-[3px] border-[#a0a0a0]" />}
        </div>
      ))}
      {PERIODS.map((p) => (
        <button key={p} type="button" className="h-[23px] shrink-0">
          {p}
        </button>
      ))}
      <div className="absolute top-[271px] right-0 h-[71px] w-1 border-y border-l border-[#c0a040] bg-[linear-gradient(#101830_38%,#800010_38%,#800010_64%,#101830_64%)]" />
    </div>
  );
}

function Watermark() {
  return (
    <svg className="pointer-events-none absolute inset-0 size-full">
      <defs>
        <pattern id="wm" x="-91" y="48" width="285" height="219" patternUnits="userSpaceOnUse">
          <text
            transform="translate(143 110) rotate(-45)"
            y="8"
            textAnchor="middle"
            fontSize="24"
            fill="#808080"
            fillOpacity=".2"
          >
            www.cfchi.com
          </text>
        </pattern>
      </defs>
      <rect width="100%" height="100%" fill="url(#wm)" />
    </svg>
  );
}
